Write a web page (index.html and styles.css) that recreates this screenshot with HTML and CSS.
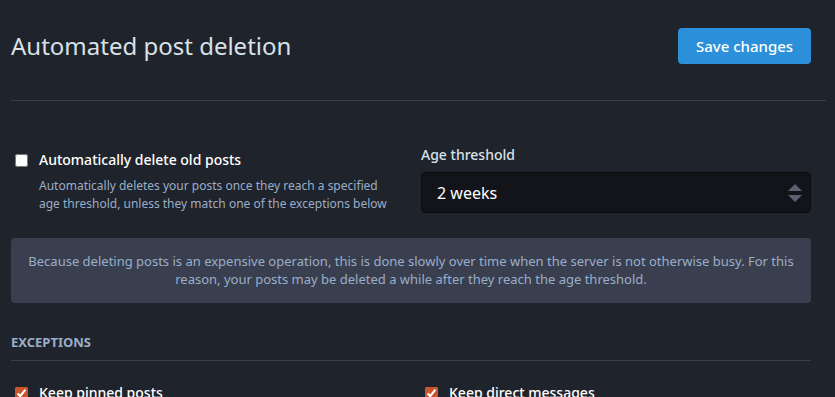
FILE: index.html
```html
<!DOCTYPE html>
<html>
<head>
   <link rel="stylesheet" href="styles.css">
</head>
<body>
   <div class="content">
      <div class="page-header">
         <h1>Automated post deletion</h1>
         <button class="btn">Save changes</button>
      </div>

      <div class="fields-row">
         <div class="field">
            <label class="check-label">
               <input type="checkbox">
               <span>Automatically delete old posts</span>
            </label>
            <p class="hint">Automatically deletes your posts once they reach a specified age threshold, unless they match one of the exceptions below</p>
         </div>
         <div class="field">
            <label class="field-label" for="min_age">Age threshold</label>
            <div class="select-wrap">
               <select id="min_age">
                  <option>2 weeks</option>
               </select>
               <span class="arrows"></span>
            </div>
         </div>
      </div>

      <div class="notice">
         Because deleting posts is an expensive operation, this is done slowly over time when the server is not otherwise busy. For this reason, your posts may be deleted a while after they reach the age threshold.
      </div>

      <h4 class="section-title">Exceptions</h4>

      <div class="fields-row checks">
         <label class="check-label">
            <input type="checkbox" checked>
            <span>Keep pinned posts</span>
         </label>
         <label class="check-label">
            <input type="checkbox" checked>
            <span>Keep direct messages</span>
         </label>
      </div>
   </div>
</body>
</html>
```

FILE: styles.css
```css
body {
   font-family: 'Noto Sans', Roboto, sans-serif;
   background-color: #1f232b;
   color: #d9e1e8;
   margin: 0;
   padding: 0;
}

.content {
   width: 800px;
   padding: 0 11px;
}

.page-header {
   display: flex;
   align-items: center;
   justify-content: space-between;
   padding-top: 28px;
   padding-bottom: 36px;
   margin-right: -15px;
   padding-right: 15px;
   border-bottom: 1px solid #393f4f;
   margin-bottom: 44px;
}

h1 {
   margin: 0;
   font-size: 24px;
   font-weight: 400;
   line-height: 36px;
   color: #d9e1e8;
}

.btn {
   font-family: inherit;
   background-color: #2b90d9;
   color: #fff;
   border: none;
   border-radius: 4px;
   font-size: 15px;
   font-weight: 500;
   height: 36px;
   width: 133px;
   cursor: pointer;
}

.fields-row {
   display: flex;
   align-items: flex-start;
   gap: 20px;
}

.field {
   flex: 1;
}

.check-label {
   display: flex;
   align-items: center;
   font-size: 14px;
   font-weight: 500;
   color: #fff;
   line-height: 20px;
}

.check-label input {
   width: 13px;
   height: 13px;
   margin: 0 11px 0 4px;
   accent-color: #c8552d;
}

.field:first-child .check-label {
   margin-top: 5px;
}

.hint {
   margin: 7px 0 0 28px;
   font-size: 12px;
   line-height: 18px;
   color: #9baec8;
   width: 360px;
}

.field-label {
   display: block;
   font-size: 14px;
   font-weight: 500;
   line-height: 20px;
   margin-bottom: 7px;
}

.select-wrap {
   position: relative;
}

select {
   appearance: none;
   width: 100%;
   height: 41px;
   background-color: #131419;
   color: #fff;
   border: 1px solid #0a0b0e;
   border-radius: 4px;
   font-family: inherit;
   font-size: 16px;
   padding: 0 15px;
}

.arrows {
   position: absolute;
   right: 9px;
   top: 12px;
   width: 14px;
   height: 18px;
}

.arrows::before,
.arrows::after {
   content: '';
   position: absolute;
   left: 0;
   border-left: 7px solid transparent;
   border-right: 7px solid transparent;
}

.arrows::before {
   top: 0;
   border-bottom: 7px solid #5b6172;
}

.arrows::after {
   bottom: 0;
   border-top: 7px solid #5b6172;
}

.notice {
   margin-top: 25px;
   background-color: #393f4f;
   border-radius: 4px;
   padding: 14px 15px 15px;
   text-align: center;
   font-size: 13px;
   line-height: 18px;
   color: #9baec8;
}

.section-title {
   margin: 30px 0 0;
   font-size: 13px;
   font-weight: 700;
   text-transform: uppercase;
   color: #9baec8;
   line-height: 18px;
   padding-bottom: 9px;
   border-bottom: 1px solid #393f4f;
}

.checks {
   margin-top: 22px;
}

.checks .check-label {
   flex: 1;
}
```
